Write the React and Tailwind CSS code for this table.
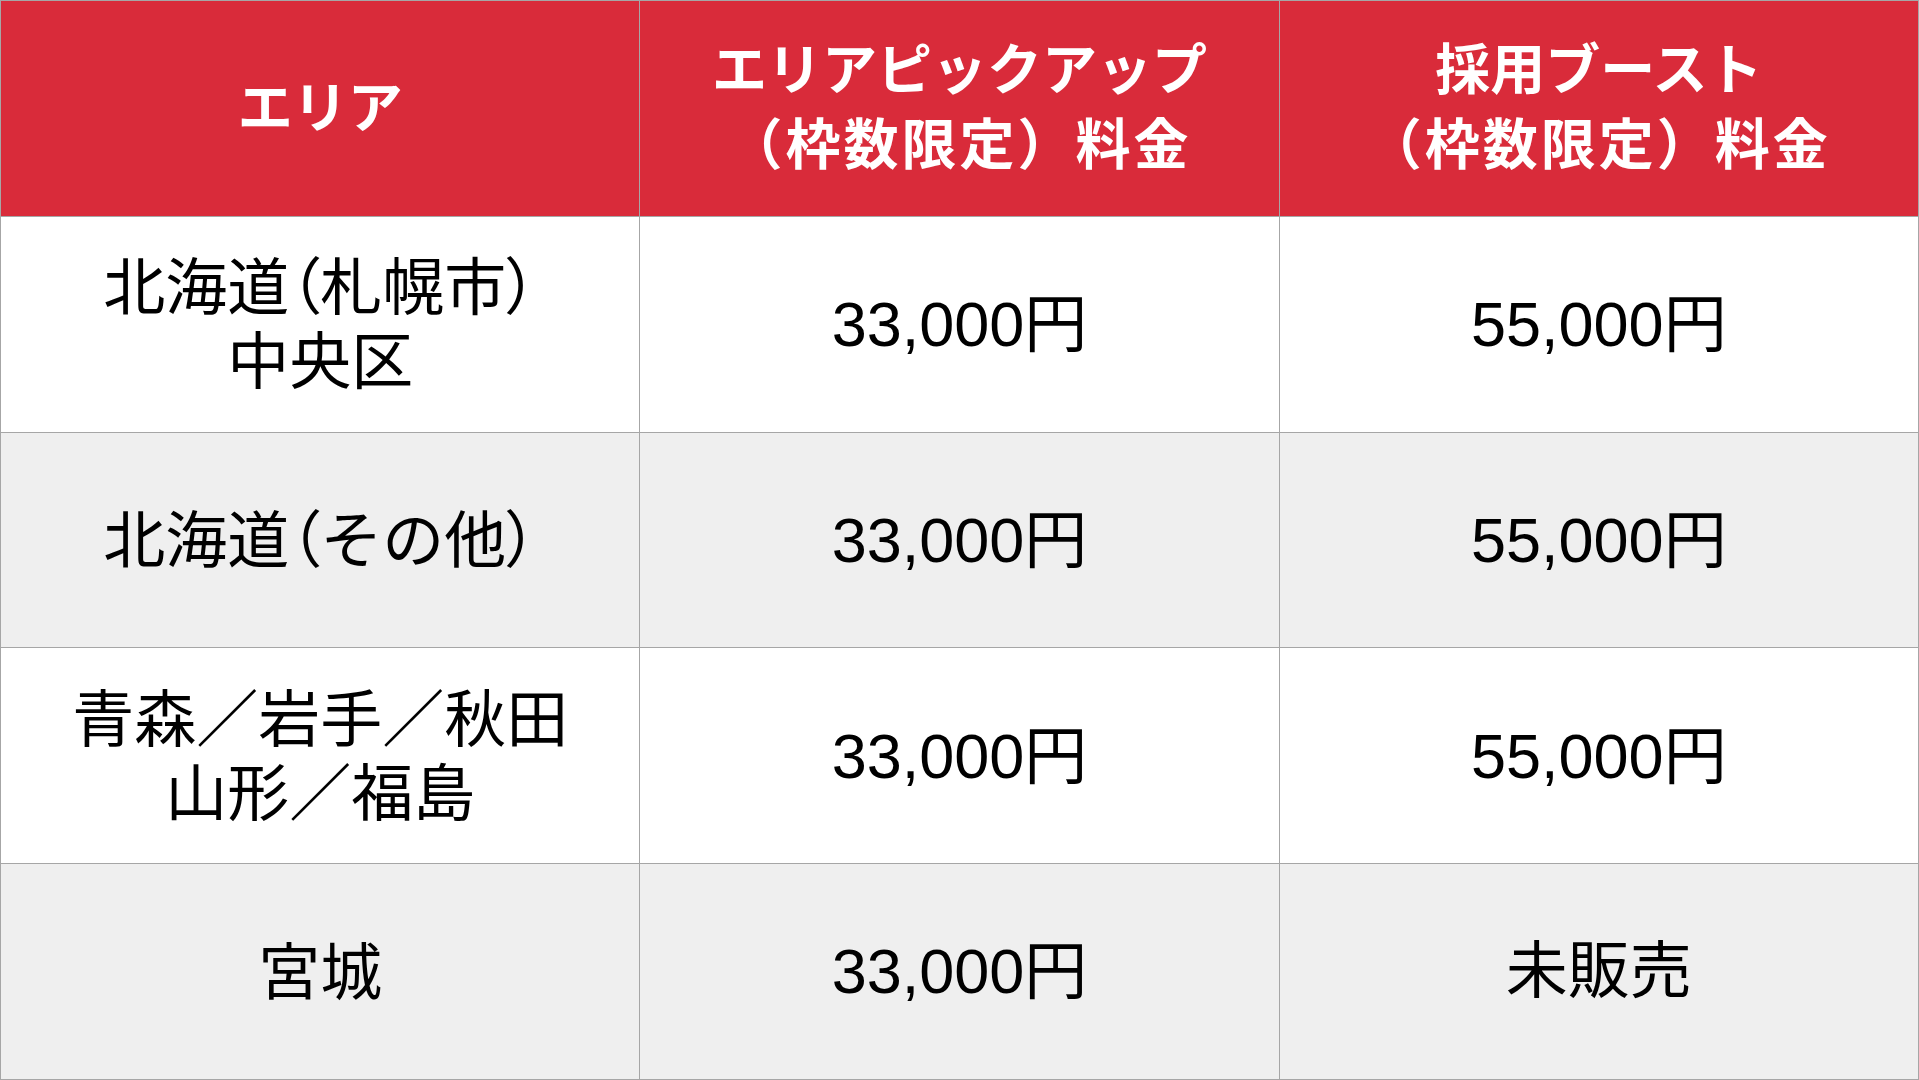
import React from "react";

const P = ({ children }) => <span className="[font-feature-settings:'palt']">{children}</span>;

const rows = [
  { area: [<>北海道<P>（</P>札幌市<P>）</P></>, "中央区"], a: "33,000円", b: "55,000円", bg: "bg-white" },
  { area: [<>北海道<P>（</P>その他<P>）</P></>], a: "33,000円", b: "55,000円", bg: "bg-[#efefef]" },
  { area: ["青森／岩手／秋田", "山形／福島"], a: "33,000円", b: "55,000円", bg: "bg-white" },
  { area: ["宮城"], a: "33,000円", b: "未販売", bg: "bg-[#efefef]" },
];

function Head({ lines }) {
  return (
    <div className="bg-[#d92b3a] flex flex-col items-center justify-center text-white font-bold text-[55px] leading-[75px]">
      {lines.map((l, i) => (
        <div key={i} className={l.startsWith("（") ? "tracking-[3px]" : ""}>{l}</div>
      ))}
    </div>
  );
}

export default function App() {
  return (
    <div
      className="w-[1919px] h-[1080px] grid grid-cols-3 grid-rows-5 gap-px bg-[#a6a6a6] border border-[#a6a6a6] text-black"
      style={{ fontFamily: '"Liberation Sans", "Noto Sans CJK JP", sans-serif' }}
    >
      <Head lines={["エリア"]} />
      <Head lines={["エリアピックアップ", "（枠数限定）料金"]} />
      <Head lines={["採用ブースト", "（枠数限定）料金"]} />
      {rows.map((r, i) => (
        <React.Fragment key={i}>
          <div className={`${r.bg} flex flex-col items-center justify-center text-[62px] leading-[74px] pt-1`}>
            {r.area.map((l, j) => (
              <div key={j}>{l}</div>
            ))}
          </div>
          <div className={`${r.bg} flex items-center justify-center text-[63px]`}>{r.a}</div>
          <div className={`${r.bg} flex items-center justify-center ${r.b === "未販売" ? "text-[62px]" : "text-[63px]"}`}>{r.b}</div>
        </React.Fragment>
      ))}
    </div>
  );
}
